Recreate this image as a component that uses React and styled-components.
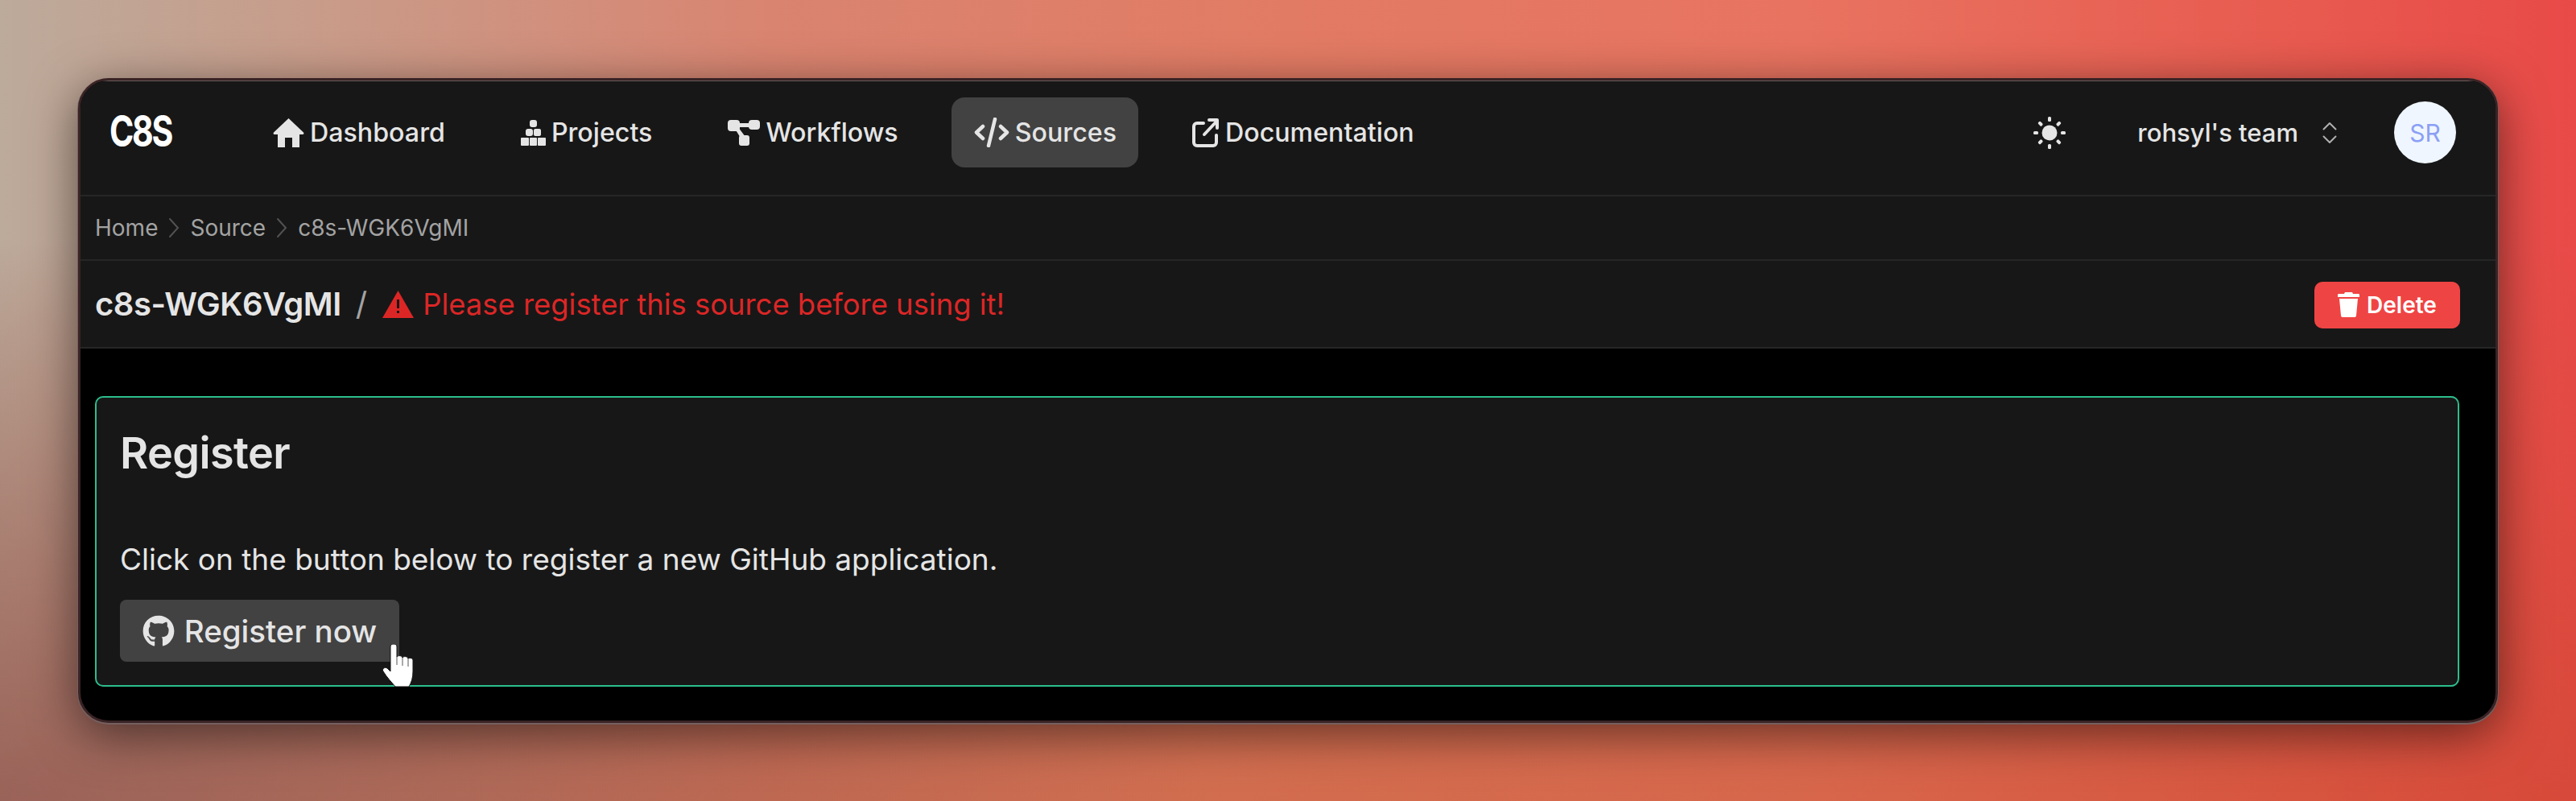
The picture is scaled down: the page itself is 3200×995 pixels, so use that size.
import styled, { createGlobalStyle } from "styled-components";
import { FaGithub } from "react-icons/fa";
import { ChevronsUpDown } from "lucide-react";

const Global = createGlobalStyle`
  * { box-sizing: border-box; }
  body {
    margin: 0;
    font-family: Inter, "Noto Sans", sans-serif;
  }
`;

const Page = styled.div`
  width: 3200px;
  height: 995px;
  padding: 97px 97px 0;
  background:
    radial-gradient(ellipse 1500px 700px at 0 100%, rgba(125, 55, 60, 0.5), transparent),
    linear-gradient(180deg, transparent 30%, rgba(170, 70, 20, 0.28) 100%),
    linear-gradient(90deg, #bcaa9b 0%, #c89c8a 12%, #d98470 30%, #e27b64 50%, #e87360 70%, #e85c50 88%, #e84a48 100%);
`;

const Window = styled.div`
  height: 801px;
  border: 3px solid #3a2325;
  border-radius: 38px;
  background: #000;
  overflow: hidden;
  box-shadow: 0 1px 0 1px #75605f, 0 14px 60px rgba(0, 0, 0, 0.55);
`;

const Nav = styled.nav`
  height: 144px;
  padding: 22px 49px 35px 36px;
  display: flex;
  align-items: center;
  background: #171717;
  border-bottom: 2px solid #262626;
  box-shadow: inset 0 1px 0 #6b5b5b;
`;

const Logo = styled.div`
  width: 175px;
  font-size: 54px;
  line-height: 54px;
  font-weight: 700;
  letter-spacing: -3px;
  color: #fff;
  margin-top: -4px;
  transform: scaleX(0.76);
  transform-origin: left center;
`;

const Menu = styled.div`
  display: flex;
  gap: 39px;
`;

const MenuItem = styled.a`
  height: 87px;
  padding: 0 27px 0 28px;
  display: flex;
  align-items: center;
  gap: 7px;
  border-radius: 16px;
  font-size: 32.2px;
  font-weight: 500;
  color: #e5e5e5;
  background: ${(p) => (p.$active ? "#424242" : "transparent")};
`;

const NavRight = styled.div`
  margin-left: auto;
  display: flex;
  align-items: center;
`;

const Team = styled.div`
  margin-left: 89px;
  display: flex;
  align-items: center;
  gap: 21px;
  font-size: 31px;
  font-weight: 500;
  color: #e5e5e5;
`;

const Avatar = styled.div`
  margin-left: 62px;
  width: 77px;
  height: 77px;
  border-radius: 50%;
  background: #eff6ff;
  color: #8b9ff5;
  font-size: 30px;
  display: flex;
  align-items: center;
  justify-content: center;
`;

const Crumbs = styled.div`
  height: 80px;
  padding: 0 18px;
  display: flex;
  align-items: center;
  gap: 13px;
  background: #171717;
  border-bottom: 2px solid #262626;
  font-size: 28px;
  color: #a3a3a3;
`;

const Header = styled.div`
  height: 109px;
  padding: 0 44px 0 18px;
  display: flex;
  align-items: center;
  background: #171717;
  border-bottom: 2px solid #262626;
`;

const Name = styled.div`
  font-size: 40px;
  font-weight: 600;
  letter-spacing: -0.5px;
  color: #e5e5e5;
`;

const Slash = styled.span`
  margin: 0 19px 0 18px;
  font-size: 40px;
  color: #a3a3a3;
`;

const Warning = styled.div`
  display: flex;
  align-items: center;
  gap: 11px;
  font-size: 36.4px;
  color: #dc2626;
`;

const DeleteButton = styled.button`
  margin: 2px 0 0 auto;
  width: 181px;
  height: 58px;
  border: 0;
  border-radius: 10px;
  background: #ef4444;
  color: #fff;
  font-family: inherit;
  font-size: 28px;
  font-weight: 600;
  display: flex;
  align-items: center;
  justify-content: center;
  gap: 9px;
`;

const Content = styled.main`
  padding: 59px 45px 0 18px;
`;

const Card = styled.section`
  position: relative;
  height: 361px;
  padding: 37px 29px 0;
  border: 2px solid #2cbd8b;
  border-radius: 10px;
  background: #171717;
`;

const Title = styled.h2`
  margin: 0;
  font-size: 54px;
  line-height: 64px;
  font-weight: 600;
  letter-spacing: -0.6px;
  color: #e5e5e5;
`;

const Text = styled.p`
  margin: 78px 0 0;
  font-size: 37px;
  line-height: 44px;
  color: #e5e5e5;
`;

const RegisterButton = styled.button`
  margin-top: 28px;
  width: 347px;
  height: 77px;
  border: 0;
  border-radius: 8px;
  background: #424242;
  color: #e5e5e5;
  font-family: inherit;
  font-size: 38.5px;
  font-weight: 500;
  display: flex;
  align-items: center;
  justify-content: center;
  gap: 12px;
`;

const Cursor = styled.svg`
  position: absolute;
  left: 355px;
  top: 306px;
`;

const HomeIcon = () => (
  <svg width="39" height="36" viewBox="0 0 39 36" fill="#e5e5e5">
    <path d="M19.5 0 38 17.5c1 1.2.3 2.5-1 2.5h-4v16H24V24h-9v12H6V20H2c-1.3 0-2-1.300-1-2.500z" />
  </svg>
);

const ProjectsIcon = () => (
  <svg width="31" height="32" viewBox="0 0 31 32" fill="#e5e5e5">
    <rect x="11" y="0" width="9" height="9" rx="3" />
    <rect x="6" y="11" width="9" height="9" rx="3" />
    <rect x="16" y="11" width="9" height="9" rx="2" />
    <rect x="0" y="22" width="10" height="10" rx="1" />
    <rect x="11" y="22" width="9" height="10" rx="1" />
    <rect x="21" y="22" width="10" height="10" rx="1" />
  </svg>
);

const WorkflowsIcon = () => (
  <svg width="40" height="32" viewBox="0 0 40 32" fill="#e5e5e5">
    <rect x="0" y="0" width="15" height="14" rx="4" />
    <rect x="26" y="0" width="14" height="12" rx="4" />
    <rect x="14" y="19" width="13" height="13" rx="3" />
    <path d="M12 4h16v5H12zM9 11l4-2 9 12-5 3z" />
  </svg>
);

const CodeIcon = () => (
  <svg width="44" height="37" viewBox="0 0 44 37" fill="none" stroke="#e5e5e5" strokeWidth="4.5" strokeLinecap="round" strokeLinejoin="round">
    <path d="M11 11 3 18.5l8 7.500M33 11l8 7.500-8 7.500M26 2 18 35" />
  </svg>
);

const DocsIcon = () => (
  <svg width="34" height="37" viewBox="0 0 34 37" fill="none" stroke="#e5e5e5" strokeWidth="4" strokeLinecap="round" strokeLinejoin="round">
    <path d="M14 7H6a4 4 0 0 0-4 4v20a4 4 0 0 0 4 4h20a4 4 0 0 0 4-4v-9M15 21 31 4M21 3h10v10" />
  </svg>
);

const SunIcon = () => (
  <svg width="40" height="40" viewBox="0 0 40 40" fill="#e5e5e5">
    <circle cx="20" cy="20" r="9.5" />
    <rect x="18" y="0" width="4" height="6" rx="1.5" />
    <rect x="18" y="34" width="4" height="6" rx="1.5" />
    <rect x="0" y="18" width="6" height="4" rx="1.5" />
    <rect x="34" y="18" width="6" height="4" rx="1.5" />
    <rect x="18" y="1" width="4" height="6" rx="1.5" transform="rotate(45 20 20)" />
    <rect x="18" y="33" width="4" height="6" rx="1.5" transform="rotate(45 20 20)" />
    <rect x="1" y="18" width="6" height="4" rx="1.5" transform="rotate(45 20 20)" />
    <rect x="33" y="18" width="6" height="4" rx="1.5" transform="rotate(45 20 20)" />
  </svg>
);

const CrumbArrow = () => (
  <svg width="14" height="26" viewBox="0 0 14 26" fill="none" stroke="#525252" strokeWidth="2" strokeLinecap="round">
    <path d="M2 2 12 13 2 24" />
  </svg>
);

const TriangleIcon = () => (
  <svg width="39" height="34" viewBox="0 0 39 34">
    <path d="M19.5 0 39 34H0z" fill="#dc2626" />
    <rect x="18" y="11" width="3" height="11" fill="#171717" />
    <rect x="18" y="25" width="3" height="3" fill="#171717" />
  </svg>
);

const TrashIcon = () => (
  <svg width="27" height="31" viewBox="0 0 27 31" fill="#fff">
    <path d="M9 0h9l1 2h7c1 0 1 1 1 2v2H0V4c0-1 0-2 1-2h7zM2 8h23l-2 21a2 2 0 0 1-2 2H6a2 2 0 0 1-2-2z" />
  </svg>
);

const HandCursor = () => (
  <Cursor width="38" height="53" viewBox="0 0 38 53">
    <path
      d="M10 3c0-4 8-4 8 0v13c1-2 6-2 7 1 1-2 6-2 7 1 1-1 6-1 6 2v14c0 8-2 14-5 19H16C12 48 6 42 1 34c-2-3 2-6 5-4l4 4z"
      fill="#fff"
      stroke="#111"
      strokeWidth="1"
    />
    <path d="M18 16v10M25 17v10M32 18v10" stroke="#555" strokeWidth="1" fill="none" />
  </Cursor>
);

export default function App() {
  return (
    <Page>
      <Global />
      <Window>
        <Nav>
          <Logo>C8S</Logo>
          <Menu>
            <MenuItem><HomeIcon />Dashboard</MenuItem>
            <MenuItem><ProjectsIcon />Projects</MenuItem>
            <MenuItem><WorkflowsIcon />Workflows</MenuItem>
            <MenuItem $active><CodeIcon />Sources</MenuItem>
            <MenuItem><DocsIcon />Documentation</MenuItem>
          </Menu>
          <NavRight>
            <SunIcon />
            <Team>
              rohsyl's team
              <ChevronsUpDown size={36} strokeWidth={1.3} color="#b0b0b0" />
            </Team>
            <Avatar>SR</Avatar>
          </NavRight>
        </Nav>
        <Crumbs>
          Home
          <CrumbArrow />
          Source
          <CrumbArrow />
          c8s-WGK6VgMI
        </Crumbs>
        <Header>
          <Name>c8s-WGK6VgMI</Name>
          <Slash>/</Slash>
          <Warning><TriangleIcon />Please register this source before using it!</Warning>
          <DeleteButton><TrashIcon />Delete</DeleteButton>
        </Header>
        <Content>
          <Card>
            <Title>Register</Title>
            <Text>Click on the button below to register a new GitHub application.</Text>
            <RegisterButton><FaGithub size={40} />Register now</RegisterButton>
            <HandCursor />
          </Card>
        </Content>
      </Window>
    </Page>
  );
}
